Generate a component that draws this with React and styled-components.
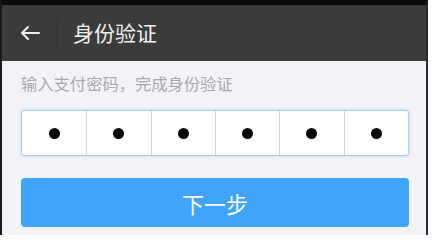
import styled, { createGlobalStyle } from 'styled-components'

const GlobalStyle = createGlobalStyle`
    html, body {
        margin: 0;
        padding: 0;
        background: #ffffff;
        font-family: "Noto Sans CJK SC", "Noto Sans", sans-serif;
    }
`;

const digits = ['1', '2', '3', '4', '5', '6'];

function BackArrow() {
    return (
        <svg width="20" height="16" viewBox="0 0 20 16" fill="none">
            <path d="M19 8H2M8 2L2 8l6 6" stroke="#f2f2f2" strokeWidth="2" strokeLinecap="round" strokeLinejoin="round" />
        </svg>
    )
}

export default function App() {
    return (
        <>
            <GlobalStyle />
            <Screen>
                <Header>
                    <BackButton>
                        <BackArrow />
                    </BackButton>
                    <Title>身份验证</Title>
                </Header>
                <Content>
                    <Hint>输入支付密码，完成身份验证</Hint>
                    <PinBox>
                        {digits.map((d) => (
                            <PinCell key={d}>
                                <Dot />
                            </PinCell>
                        ))}
                    </PinBox>
                    <NextButton>下一步</NextButton>
                </Content>
            </Screen>
        </>
    )
}

const Screen = styled.div`
    width: 424px;
    height: 230px;
    border-top: 5px solid #0d0d0d;
    border-left: 2px solid #1a1a1a;
    border-right: 2px solid #2a2a2a;
    background: #f3f3f7;
    display: flex;
    flex-direction: column;
`;

const Header = styled.div`
    height: 56px;
    background: #3b3b3b;
    display: flex;
    align-items: center;
`;

const BackButton = styled.div`
    width: 56px;
    height: 30px;
    display: flex;
    align-items: center;
    justify-content: center;
    border-right: 1px solid #2e2e2e;
    box-sizing: border-box;
`;

const Title = styled.div`
    margin-left: 15px;
    color: #f0f0f0;
    font-size: 21px;
    line-height: 1;
    padding-bottom: 1px;
`;

const Content = styled.div`
    padding: 12px 17px 0 19px;
    display: flex;
    flex-direction: column;
`;

const Hint = styled.div`
    color: #a9a9ad;
    font-size: 16.3px;
    line-height: 20px;
    margin-bottom: 17px;
`;

const PinBox = styled.div`
    height: 46px;
    box-sizing: border-box;
    display: grid;
    grid-template-columns: repeat(6, 1fr);
    background: #ffffff;
    border: 1px solid #a9d0f3;
    border-radius: 3px;
    box-shadow: 0 0 3px rgba(110, 175, 240, 0.55);
    overflow: hidden;
`;

const PinCell = styled.div`
    display: flex;
    align-items: center;
    justify-content: center;
    border-left: 1px solid #d6d6d6;
    &:first-child {
        border-left: none;
    }
`;

const Dot = styled.span`
    width: 11px;
    height: 11px;
    border-radius: 50%;
    background: #0a0a0a;
`;

const NextButton = styled.div`
    margin-top: 22px;
    height: 49px;
    border-radius: 4px;
    background: #40a4fb;
    color: #ffffff;
    font-size: 22px;
    display: flex;
    align-items: center;
    justify-content: center;
`;
